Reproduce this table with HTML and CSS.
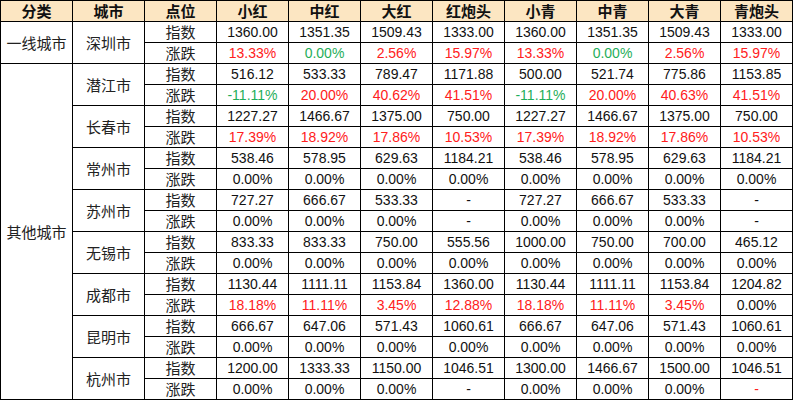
FILE: index.html
```html
<!DOCTYPE html>
<html lang="zh">
<head>
<meta charset="utf-8">
<title>价格指数</title>
<link rel="stylesheet" href="styles.css">
</head>
<body>
<table class="grid">
<colgroup>
<col class="c"><col class="c"><col class="c"><col class="c"><col class="c"><col class="c"><col class="c"><col class="c"><col class="c"><col class="c"><col class="c">
</colgroup>
<thead>
<tr class="head"><th>分类</th><th>城市</th><th>点位</th><th>小红</th><th>中红</th><th>大红</th><th>红炮头</th><th>小青</th><th>中青</th><th>大青</th><th>青炮头</th></tr>
</thead>
<tbody>
<tr><td class="zh" rowspan="2">一线城市</td><td class="zh" rowspan="2">深圳市</td><td class="zh">指数</td><td>1360.00</td><td>1351.35</td><td>1509.43</td><td>1333.00</td><td>1360.00</td><td>1351.35</td><td>1509.43</td><td>1333.00</td></tr>
<tr><td class="zh">涨跌</td><td class="r">13.33%</td><td class="g">0.00%</td><td class="r">2.56%</td><td class="r">15.97%</td><td class="r">13.33%</td><td class="g">0.00%</td><td class="r">2.56%</td><td class="r">15.97%</td></tr>

<tr><td class="zh" rowspan="16">其他城市</td><td class="zh" rowspan="2">潜江市</td><td class="zh">指数</td><td>516.12</td><td>533.33</td><td>789.47</td><td>1171.88</td><td>500.00</td><td>521.74</td><td>775.86</td><td>1153.85</td></tr>
<tr><td class="zh">涨跌</td><td class="g">-11.11%</td><td class="r">20.00%</td><td class="r">40.62%</td><td class="r">41.51%</td><td class="g">-11.11%</td><td class="r">20.00%</td><td class="r">40.63%</td><td class="r">41.51%</td></tr>

<tr><td class="zh" rowspan="2">长春市</td><td class="zh">指数</td><td>1227.27</td><td>1466.67</td><td>1375.00</td><td>750.00</td><td>1227.27</td><td>1466.67</td><td>1375.00</td><td>750.00</td></tr>
<tr><td class="zh">涨跌</td><td class="r">17.39%</td><td class="r">18.92%</td><td class="r">17.86%</td><td class="r">10.53%</td><td class="r">17.39%</td><td class="r">18.92%</td><td class="r">17.86%</td><td class="r">10.53%</td></tr>

<tr><td class="zh" rowspan="2">常州市</td><td class="zh">指数</td><td>538.46</td><td>578.95</td><td>629.63</td><td>1184.21</td><td>538.46</td><td>578.95</td><td>629.63</td><td>1184.21</td></tr>
<tr><td class="zh">涨跌</td><td>0.00%</td><td>0.00%</td><td>0.00%</td><td>0.00%</td><td>0.00%</td><td>0.00%</td><td>0.00%</td><td>0.00%</td></tr>

<tr><td class="zh" rowspan="2">苏州市</td><td class="zh">指数</td><td>727.27</td><td>666.67</td><td>533.33</td><td>-</td><td>727.27</td><td>666.67</td><td>533.33</td><td>-</td></tr>
<tr><td class="zh">涨跌</td><td>0.00%</td><td>0.00%</td><td>0.00%</td><td>-</td><td>0.00%</td><td>0.00%</td><td>0.00%</td><td>-</td></tr>

<tr><td class="zh" rowspan="2">无锡市</td><td class="zh">指数</td><td>833.33</td><td>833.33</td><td>750.00</td><td>555.56</td><td>1000.00</td><td>750.00</td><td>700.00</td><td>465.12</td></tr>
<tr><td class="zh">涨跌</td><td>0.00%</td><td>0.00%</td><td>0.00%</td><td>0.00%</td><td>0.00%</td><td>0.00%</td><td>0.00%</td><td>0.00%</td></tr>

<tr><td class="zh" rowspan="2">成都市</td><td class="zh">指数</td><td>1130.44</td><td>1111.11</td><td>1153.84</td><td>1360.00</td><td>1130.44</td><td>1111.11</td><td>1153.84</td><td>1204.82</td></tr>
<tr><td class="zh">涨跌</td><td class="r">18.18%</td><td class="r">11.11%</td><td class="r">3.45%</td><td class="r">12.88%</td><td class="r">18.18%</td><td class="r">11.11%</td><td class="r">3.45%</td><td>0.00%</td></tr>

<tr><td class="zh" rowspan="2">昆明市</td><td class="zh">指数</td><td>666.67</td><td>647.06</td><td>571.43</td><td>1060.61</td><td>666.67</td><td>647.06</td><td>571.43</td><td>1060.61</td></tr>
<tr><td class="zh">涨跌</td><td>0.00%</td><td>0.00%</td><td>0.00%</td><td>0.00%</td><td>0.00%</td><td>0.00%</td><td>0.00%</td><td>0.00%</td></tr>

<tr><td class="zh" rowspan="2">杭州市</td><td class="zh">指数</td><td>1200.00</td><td>1333.33</td><td>1150.00</td><td>1046.51</td><td>1300.00</td><td>1466.67</td><td>1500.00</td><td>1046.51</td></tr>
<tr><td class="zh">涨跌</td><td>0.00%</td><td>0.00%</td><td>0.00%</td><td>-</td><td>0.00%</td><td>0.00%</td><td>0.00%</td><td class="r">-</td></tr>
</tbody>
</table>
</body>
</html>
```

FILE: styles.css
```css
html, body {
  margin: 0;
  padding: 0;
  background: #ffffff;
}

.grid {
  border-collapse: collapse;
  table-layout: fixed;
  width: 793px;
  font-family: "Liberation Sans", "Noto Sans CJK SC", sans-serif;
  font-size: 14px;
  color: #111111;
}

.grid .c {
  width: 72px;
}

.grid th,
.grid td {
  border: 1px solid #000000;
  padding: 0;
  height: 20px;
  line-height: 20px;
  text-align: center;
  vertical-align: middle;
  white-space: nowrap;
  overflow: hidden;
}

.head th {
  background: #fce6c2;
  font-family: "Noto Sans CJK SC", sans-serif;
  font-weight: 700;
  font-size: 15px;
  color: #111111;
}

.grid td.zh {
  font-family: "Noto Sans CJK SC", sans-serif;
  font-size: 15px;
  color: #222222;
}

.grid td.r {
  color: #ff2020;
}

.grid td.g {
  color: #1fae5a;
}
```
